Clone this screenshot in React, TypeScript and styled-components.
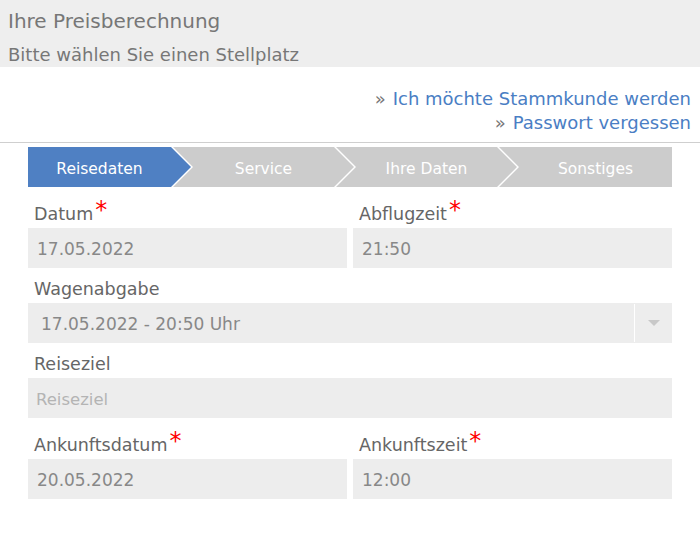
import React from "react";
import styled, { createGlobalStyle } from "styled-components";

const GlobalStyle = createGlobalStyle`
  html, body {
    margin: 0;
    padding: 0;
    background: #fff;
  }
  body {
    font-family: "DejaVu Sans", Verdana, sans-serif;
    color: #666;
  }
`;

const Page = styled.div`
  width: 700px;
`;

const Header = styled.div`
  background: #eeeeee;
  height: 67px;
  padding: 0 8px;
  box-sizing: border-box;
`;

const Title = styled.h1`
  margin: 0;
  padding-top: 8px;
  font-size: 20px;
  line-height: 26px;
  font-weight: normal;
  color: #777;
`;

const Subtitle = styled.p`
  margin: 0;
  padding-top: 8px;
  font-size: 18px;
  line-height: 26px;
  color: #777;
`;

const Links = styled.div`
  display: flex;
  flex-direction: column;
  align-items: flex-end;
  padding: 20px 9px 0 0;
  height: 76px;
  box-sizing: border-box;
  border-bottom: 1px solid #cfcfcf;
`;

const LinkRow = styled.a`
  font-size: 18px;
  line-height: 24px;
  color: #4a7ec4;
  text-decoration: none;
  &::before {
    content: "»";
    color: #777;
    margin-right: 7px;
  }
`;

const Content = styled.div`
  padding: 4px 28px 0;
`;

const Steps = styled.div`
  display: flex;
  height: 40px;
  width: 644px;
  overflow: hidden;
`;

const Step = styled.div<{ $active?: boolean; $first?: boolean; $last?: boolean }>`
  flex: none;
  height: 40px;
  box-sizing: border-box;
  width: ${(p) => (p.$first ? "163px" : p.$last ? "173px" : "181px")};
  margin-left: ${(p) => (p.$first ? "0" : "-18px")};
  padding-top: 3px;
  padding-left: ${(p) => (p.$first ? "0" : "20px")};
  padding-right: ${(p) => (p.$last ? "0" : "20px")};
  background: ${(p) => (p.$active ? "#4f80c3" : "#cccccc")};
  color: #fff;
  font-size: 15.5px;
  display: flex;
  align-items: center;
  justify-content: center;
  clip-path: ${(p) =>
    p.$first
      ? "polygon(0 0, calc(100% - 20px) 0, 100% 50%, calc(100% - 20px) 100%, 0 100%)"
      : p.$last
      ? "polygon(0 0, 100% 0, 100% 100%, 0 100%, 20px 50%)"
      : "polygon(0 0, calc(100% - 20px) 0, 100% 50%, calc(100% - 20px) 100%, 0 100%, 20px 50%)"};
`;

const Row = styled.div<{ $cols?: number }>`
  display: grid;
  grid-template-columns: ${(p) => (p.$cols === 2 ? "1fr 1fr" : "1fr")};
  column-gap: 6px;
`;

const Field = styled.div`
  display: flex;
  flex-direction: column;
`;

const Label = styled.label<{ $required?: boolean }>`
  display: block;
  box-sizing: border-box;
  height: ${(p) => (p.$required ? "41px" : "35px")};
  padding: ${(p) => (p.$required ? "15px" : "9px")} 0 0 6px;
  font-size: 17.5px;
  line-height: 25px;
  color: #666;
  white-space: nowrap;
`;

const Star = styled.span`
  color: #ff0000;
  font-size: 24px;
  line-height: 0;
  margin-left: 2px;
  position: relative;
  top: -2px;
`;

const Box = styled.div<{ $placeholder?: boolean; $indent?: number }>`
  height: 40px;
  background: #ededed;
  display: flex;
  align-items: center;
  padding-top: 2px;
  padding-left: ${(p) => p.$indent ?? 9}px;
  font-size: ${(p) => (p.$placeholder ? "16.5px" : "17px")};
  color: ${(p) => (p.$placeholder ? "#b4b4b4" : "#888")};
  box-sizing: border-box;
`;

const SelectBox = styled(Box)`
  justify-content: space-between;
  padding-top: 0;
  padding-right: 0;
`;

const SelectText = styled.span`
  padding-top: 2px;
`;

const Caret = styled.div`
  width: 37px;
  height: 38px;
  border-left: 1px solid #fff;
  display: flex;
  align-items: center;
  justify-content: center;
  &::after {
    content: "";
    border-left: 6px solid transparent;
    border-right: 6px solid transparent;
    border-top: 6px solid #c8c8c8;
  }
`;

const steps = ["Reisedaten", "Service", "Ihre Daten", "Sonstiges"];

export default function App() {
  return (
    <Page>
      <GlobalStyle />
      <Header>
        <Title>Ihre Preisberechnung</Title>
        <Subtitle>Bitte wählen Sie einen Stellplatz</Subtitle>
      </Header>
      <Links>
        <LinkRow href="#">Ich möchte Stammkunde werden</LinkRow>
        <LinkRow href="#">Passwort vergessen</LinkRow>
      </Links>
      <Content>
        <Steps>
          {steps.map((s, i) => (
            <Step
              key={s}
              $active={i === 0}
              $first={i === 0}
              $last={i === steps.length - 1}
            >
              {s}
            </Step>
          ))}
        </Steps>
        <Row $cols={2}>
          <Field>
            <Label $required>
              Datum<Star>*</Star>
            </Label>
            <Box>17.05.2022</Box>
          </Field>
          <Field>
            <Label $required>
              Abflugzeit<Star>*</Star>
            </Label>
            <Box>21:50</Box>
          </Field>
        </Row>
        <Row>
          <Field>
            <Label>Wagenabgabe</Label>
            <SelectBox $indent={13}>
              <SelectText>17.05.2022 - 20:50 Uhr</SelectText>
              <Caret />
            </SelectBox>
          </Field>
        </Row>
        <Row>
          <Field>
            <Label>Reiseziel</Label>
            <Box $placeholder $indent={8}>
              Reiseziel
            </Box>
          </Field>
        </Row>
        <Row $cols={2}>
          <Field>
            <Label $required>
              Ankunftsdatum<Star>*</Star>
            </Label>
            <Box>20.05.2022</Box>
          </Field>
          <Field>
            <Label $required>
              Ankunftszeit<Star>*</Star>
            </Label>
            <Box>12:00</Box>
          </Field>
        </Row>
      </Content>
    </Page>
  );
}
